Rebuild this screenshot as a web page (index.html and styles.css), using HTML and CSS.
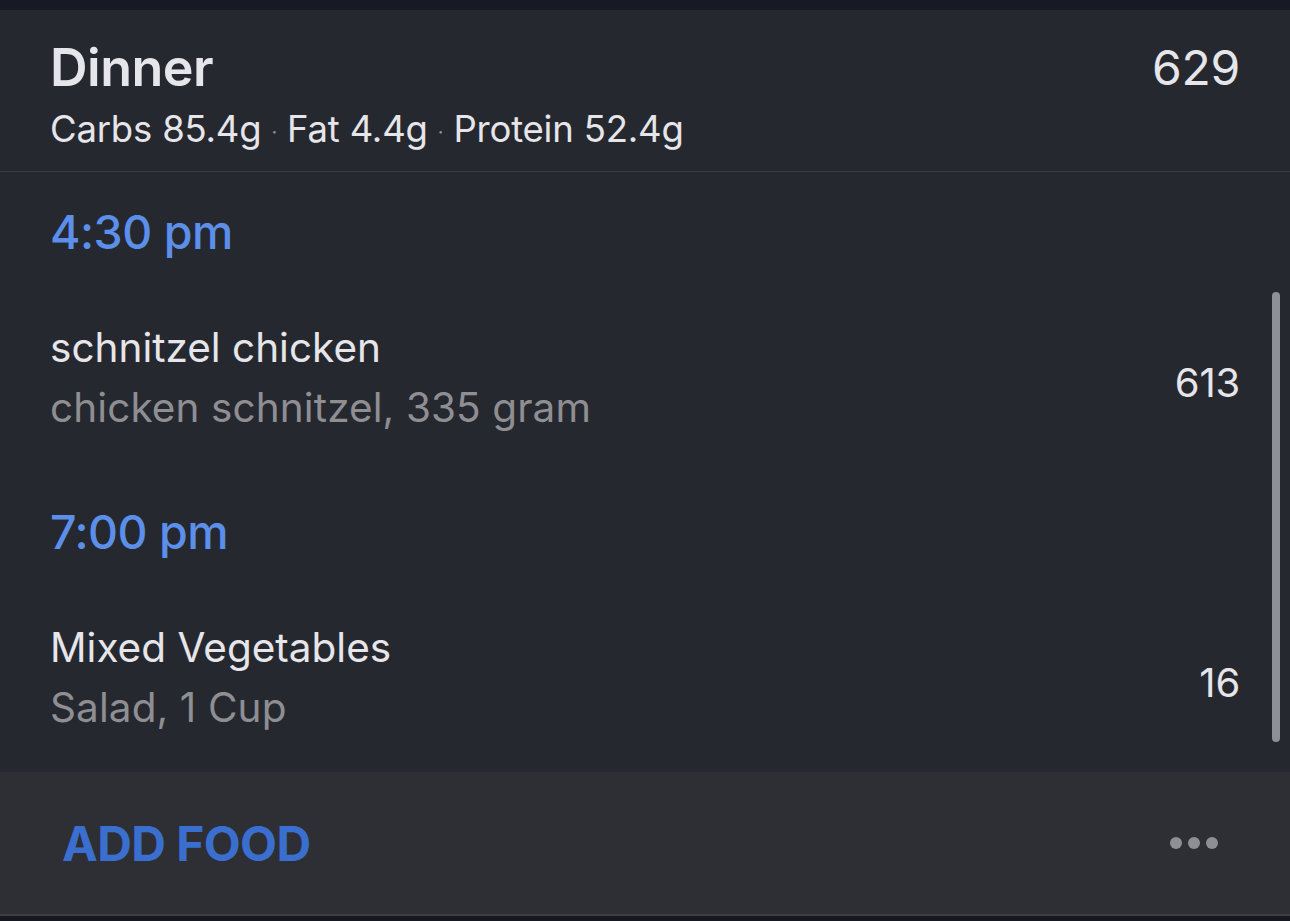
FILE: index.html
```html
<!DOCTYPE html>
<html lang="en">
<head>
    <meta charset="UTF-8">
    <meta name="viewport" content="width=device-width, initial-scale=1.0">
    <title>Dinner</title>
    <link rel="stylesheet" href="styles.css">
</head>
<body>
    <div class="top-strip"></div>

    <div class="meal">
        <div class="meal-header">
            <div class="meal-info">
                <div class="meal-title">Dinner</div>
                <div class="macros">Carbs 85.4g <span class="sep">·</span> Fat 4.4g <span class="sep">·</span> Protein 52.4g</div>
            </div>
            <div class="meal-total">629</div>
        </div>

        <div class="entries">
            <div class="time">4:30 pm</div>
            <div class="food">
                <div class="food-text">
                    <div class="food-name">schnitzel chicken</div>
                    <div class="food-detail">chicken schnitzel, 335 gram</div>
                </div>
                <div class="food-cal">613</div>
            </div>

            <div class="time">7:00 pm</div>
            <div class="food">
                <div class="food-text">
                    <div class="food-name">Mixed Vegetables</div>
                    <div class="food-detail">Salad, 1 Cup</div>
                </div>
                <div class="food-cal">16</div>
            </div>

            <!-- scroll indicator -->
            <div class="scrollbar"></div>
        </div>

        <div class="meal-footer">
            <div class="add-food">ADD FOOD</div>
            <div class="more">
                <span class="dot"></span><span class="dot"></span><span class="dot"></span>
            </div>
        </div>
    </div>

    <div class="bottom-strip"></div>
</body>
</html>
```

FILE: styles.css
```css
body {
    margin: 0;
    font-family: Inter, "Noto Sans", sans-serif;
    background-color: #171a24;
    color: #e6e6ea;
}

.top-strip {
    height: 10px;
    background-color: #171a25;
}

.meal {
    background-color: #262830;
}

.meal-header {
    display: flex;
    justify-content: space-between;
    align-items: flex-start;
    padding: 28px 50px 0 50px;
    box-sizing: border-box;
    height: 162px;
    border-bottom: 1px solid #393b43;
}

.meal-title {
    font-size: 52px;
    font-weight: 600;
    line-height: 60px;
    letter-spacing: -0.5px;
}

.macros {
    font-size: 36.5px;
    line-height: 44px;
    margin-top: 9px;
    letter-spacing: -0.2px;
}

.sep {
    color: #8e8e93;
    font-size: 20px;
    vertical-align: middle;
}

.meal-total {
    font-size: 48px;
    line-height: 60px;
    letter-spacing: -0.3px;
}

.entries {
    position: relative;
    box-sizing: border-box;
    height: 600px;
    padding: 30px 50px 0 50px;
}

.time {
    color: #5c8fe9;
    font-size: 46.5px;
    font-weight: 500;
    line-height: 60px;
    letter-spacing: -0.5px;
}

.food {
    display: flex;
    justify-content: space-between;
    align-items: center;
    margin-top: 56px;
    margin-bottom: 64px;
}

.food-name {
    font-size: 40.5px;
    line-height: 60px;
}

.food-detail {
    font-size: 40.5px;
    line-height: 60px;
    color: #8e8e93;
    letter-spacing: 0.1px;
}

.food-cal {
    font-size: 40px;
    padding-top: 8px;
    letter-spacing: -0.2px;
}

.scrollbar {
    position: absolute;
    right: 10px;
    top: 120px;
    width: 8px;
    height: 450px;
    border-radius: 4px;
    background-color: #8e9096;
}

.meal-footer {
    display: flex;
    justify-content: space-between;
    align-items: center;
    background-color: #2e2f35;
    height: 142px;
    padding: 0 72px 0 62px;
}

.add-food {
    color: #3a6fd0;
    font-size: 48px;
    font-weight: 700;
    letter-spacing: -0.6px;
}

.more {
    display: flex;
    gap: 6px;
}

.dot {
    width: 12px;
    height: 12px;
    border-radius: 50%;
    background-color: #8e8f95;
}

.bottom-strip {
    height: 7px;
    background-color: #161822;
    border-top: 2px solid #3d3e44;
}
```
